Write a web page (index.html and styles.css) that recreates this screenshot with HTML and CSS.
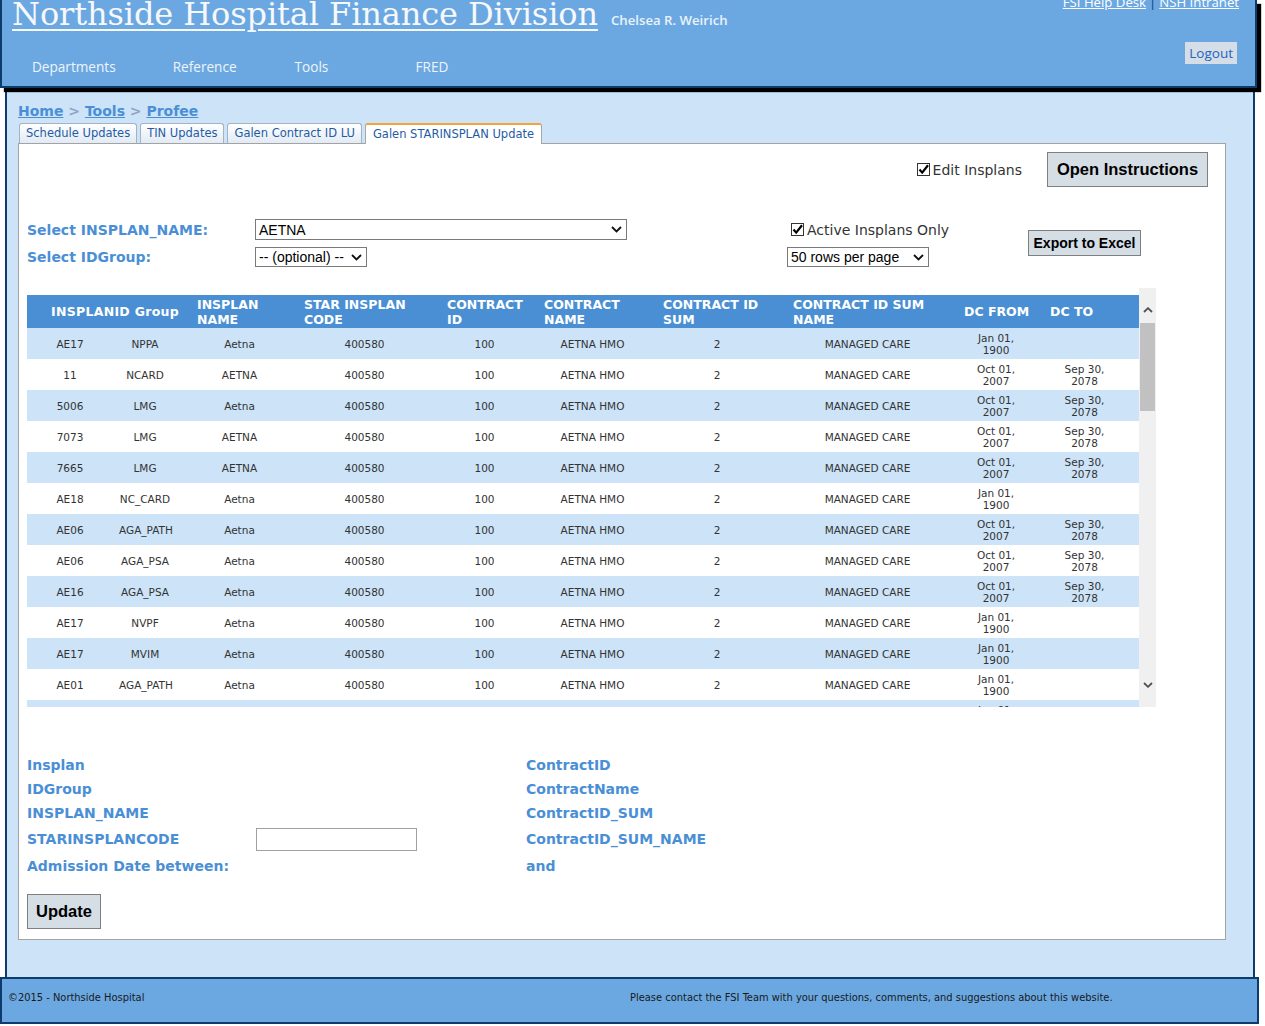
FILE: index.html
```html
<!DOCTYPE html>
<html lang="en">
<head>
<meta charset="utf-8">
<title>Northside Hospital Finance Division</title>
<link rel="stylesheet" href="styles.css">
</head>
<body>
<header class="site-header">
  <div class="brand-col">
    <div class="brand"><a class="title" href="#">Northside Hospital Finance Division</a><span class="user">Chelsea R. Weirich</span></div>
    <nav class="nav">
      <a href="#">Departments</a>
      <a href="#">Reference</a>
      <a href="#">Tools</a>
      <a href="#">FRED</a>
    </nav>
  </div>
  <div class="util">
    <div class="links"><a href="#">FSI Help Desk</a><span class="sep">|</span><a href="#">NSH Intranet</a></div>
    <a class="logout" href="#">Logout</a>
  </div>
</header>

<main class="main">
  <div class="crumbs"><a href="#">Home</a> &gt; <a href="#">Tools</a> &gt; <a href="#">Profee</a></div>
  <div class="tabs">
    <span class="tab">Schedule Updates</span>
    <span class="tab">TIN Updates</span>
    <span class="tab">Galen Contract ID LU</span>
    <span class="tab active">Galen STARINSPLAN Update</span>
  </div>
  <section class="panel">
    <div class="toolbar">
      <label class="check"><svg class="cb" width="13" height="13" viewBox="0 0 13 13"><rect x="0.5" y="0.5" width="12" height="12" fill="#fff" stroke="#333"/><path d="M2.5 6.5 L5.2 9.6 L11 2.2" fill="none" stroke="#000" stroke-width="2.2"/></svg>Edit Insplans</label>
      <button class="btn btn-open">Open Instructions</button>
    </div>

    <div class="filters">
      <div class="filter-grid">
        <span class="label">Select INSPLAN_NAME:</span>
        <div class="select select-name"><span>AETNA</span><svg class="chev" width="11" height="7" viewBox="0 0 11 7"><path d="M1 1 L5.5 5.5 L10 1" fill="none" stroke="#111" stroke-width="1.8"/></svg></div>
        <span class="label">Select IDGroup:</span>
        <div class="select select-group"><span>-- (optional) --</span><svg class="chev" width="11" height="7" viewBox="0 0 11 7"><path d="M1 1 L5.5 5.5 L10 1" fill="none" stroke="#111" stroke-width="1.8"/></svg></div>
      </div>
      <div class="filter-mid">
        <label class="check"><svg class="cb" width="13" height="13" viewBox="0 0 13 13"><rect x="0.5" y="0.5" width="12" height="12" fill="#fff" stroke="#333"/><path d="M2.5 6.5 L5.2 9.6 L11 2.2" fill="none" stroke="#000" stroke-width="2.2"/></svg>Active Insplans Only</label>
        <div class="select select-rows"><span>50 rows per page</span><svg class="chev" width="11" height="7" viewBox="0 0 11 7"><path d="M1 1 L5.5 5.5 L10 1" fill="none" stroke="#111" stroke-width="1.8"/></svg></div>
      </div>
      <button class="btn btn-export">Export to Excel</button>
    </div>

    <div class="grid-wrap">
      <div class="grid-scroll">
        <table class="data">
          <colgroup>
            <col class="c1"><col class="c2"><col class="c3"><col class="c4"><col class="c5">
            <col class="c6"><col class="c7"><col class="c8"><col class="c9"><col class="c10">
          </colgroup>
          <thead>
            <tr>
              <th colspan="2" class="th-group">INSPLANID Group</th>
              <th>INSPLAN NAME</th>
              <th>STAR INSPLAN CODE</th>
              <th>CONTRACT ID</th>
              <th>CONTRACT NAME</th>
              <th>CONTRACT ID SUM</th>
              <th>CONTRACT ID SUM NAME</th>
              <th>DC FROM</th>
              <th>DC TO</th>
            </tr>
          </thead>
          <tbody>
            <tr><td>AE17</td><td>NPPA</td><td>Aetna</td><td>400580</td><td>100</td><td>AETNA HMO</td><td>2</td><td>MANAGED CARE</td><td>Jan 01,<br>1900</td><td></td></tr>
            <tr><td>11</td><td>NCARD</td><td>AETNA</td><td>400580</td><td>100</td><td>AETNA HMO</td><td>2</td><td>MANAGED CARE</td><td>Oct 01,<br>2007</td><td>Sep 30,<br>2078</td></tr>
            <tr><td>5006</td><td>LMG</td><td>Aetna</td><td>400580</td><td>100</td><td>AETNA HMO</td><td>2</td><td>MANAGED CARE</td><td>Oct 01,<br>2007</td><td>Sep 30,<br>2078</td></tr>
            <tr><td>7073</td><td>LMG</td><td>AETNA</td><td>400580</td><td>100</td><td>AETNA HMO</td><td>2</td><td>MANAGED CARE</td><td>Oct 01,<br>2007</td><td>Sep 30,<br>2078</td></tr>
            <tr><td>7665</td><td>LMG</td><td>AETNA</td><td>400580</td><td>100</td><td>AETNA HMO</td><td>2</td><td>MANAGED CARE</td><td>Oct 01,<br>2007</td><td>Sep 30,<br>2078</td></tr>
            <tr><td>AE18</td><td>NC_CARD</td><td>Aetna</td><td>400580</td><td>100</td><td>AETNA HMO</td><td>2</td><td>MANAGED CARE</td><td>Jan 01,<br>1900</td><td></td></tr>
            <tr><td>AE06</td><td>AGA_PATH</td><td>Aetna</td><td>400580</td><td>100</td><td>AETNA HMO</td><td>2</td><td>MANAGED CARE</td><td>Oct 01,<br>2007</td><td>Sep 30,<br>2078</td></tr>
            <tr><td>AE06</td><td>AGA_PSA</td><td>Aetna</td><td>400580</td><td>100</td><td>AETNA HMO</td><td>2</td><td>MANAGED CARE</td><td>Oct 01,<br>2007</td><td>Sep 30,<br>2078</td></tr>
            <tr><td>AE16</td><td>AGA_PSA</td><td>Aetna</td><td>400580</td><td>100</td><td>AETNA HMO</td><td>2</td><td>MANAGED CARE</td><td>Oct 01,<br>2007</td><td>Sep 30,<br>2078</td></tr>
            <tr><td>AE17</td><td>NVPF</td><td>Aetna</td><td>400580</td><td>100</td><td>AETNA HMO</td><td>2</td><td>MANAGED CARE</td><td>Jan 01,<br>1900</td><td></td></tr>
            <tr><td>AE17</td><td>MVIM</td><td>Aetna</td><td>400580</td><td>100</td><td>AETNA HMO</td><td>2</td><td>MANAGED CARE</td><td>Jan 01,<br>1900</td><td></td></tr>
            <tr><td>AE01</td><td>AGA_PATH</td><td>Aetna</td><td>400580</td><td>100</td><td>AETNA HMO</td><td>2</td><td>MANAGED CARE</td><td>Jan 01,<br>1900</td><td></td></tr>
            <tr><td>AE19</td><td>NC_PSA</td><td>Aetna</td><td>400580</td><td>100</td><td>AETNA HMO</td><td>2</td><td>MANAGED CARE</td><td>Jan 01,<br>1900</td><td></td></tr>
            <tr><td>AE20</td><td>NPPA</td><td>Aetna</td><td>400580</td><td>100</td><td>AETNA HMO</td><td>2</td><td>MANAGED CARE</td><td>Jan 01,<br>1900</td><td></td></tr>
          </tbody>
        </table>
      </div>
      <div class="vscroll">
        <div class="vs-up"><svg width="10" height="6" viewBox="0 0 10 6"><path d="M1 5 L5 1.2 L9 5" fill="none" stroke="#505050" stroke-width="1.8"/></svg></div>
        <div class="vs-thumb"></div>
        <div class="vs-space"></div>
        <div class="vs-down"><svg width="10" height="6" viewBox="0 0 10 6"><path d="M1 1 L5 4.8 L9 1" fill="none" stroke="#505050" stroke-width="1.8"/></svg></div>
      </div>
    </div>

    <div class="edit-form">
      <span class="label">Insplan</span><span></span><span class="label">ContractID</span>
      <span class="label">IDGroup</span><span></span><span class="label">ContractName</span>
      <span class="label">INSPLAN_NAME</span><span></span><span class="label">ContractID_SUM</span>
      <span class="label">STARINSPLANCODE</span><span><input class="text-input" type="text"></span><span class="label">ContractID_SUM_NAME</span>
      <span class="label">Admission Date between:</span><span></span><span class="label">and</span>
    </div>
    <button class="btn btn-update">Update</button>
  </section>
</main>

<footer class="site-footer">
  <span>©2015 - Northside Hospital</span>
  <span>Please contact the FSI Team with your questions, comments, and suggestions about this website.</span>
</footer>
</body>
</html>
```

FILE: styles.css
```css
* { box-sizing: border-box; }
html, body { margin: 0; padding: 0; overflow: hidden; }
body {
  width: 1265px;
  height: 1026px;
  background: #fff;
  font-family: "DejaVu Sans", Verdana, sans-serif;
}

/* ---------- header ---------- */
.site-header {
  position: relative;
  z-index: 2;
  width: 1257px;
  height: 88px;
  background: #6ba8e1;
  border: 2px solid #0d3b6b;
  border-top: 0;
  box-shadow: 4px 4px 1px #000;
  display: flex;
  justify-content: space-between;
  padding: 0 16px 0 10px;
}
.brand {
  line-height: 32px;
  margin-top: -2px;
  white-space: nowrap;
}
.title {
  font-family: "DejaVu Serif", serif;
  font-size: 32px;
  letter-spacing: -0.1px;
  color: #f6f8fb;
  text-decoration: underline;
  text-decoration-thickness: 2px;
  text-underline-offset: 4px;
}
.user {
  font-family: "Open Sans", sans-serif;
  font-weight: 600;
  font-size: 13.2px;
  color: #eaf2fb;
  margin-left: 13px;
  line-height: 1;
}
.nav {
  display: flex;
  margin-top: 21px;
  margin-left: -9px;
}
.nav a {
  min-width: 121px;
  padding: 0 29px;
  font-family: "Open Sans", sans-serif;
  font-size: 13.6px;
  line-height: 20px;
  color: #eef4fb;
  text-decoration: none;
}
.nav a:first-child { padding-right: 28px; }
.util {
  display: flex;
  flex-direction: column;
  align-items: flex-end;
  margin-top: -7px;
}
.links {
  font-family: "Open Sans", sans-serif;
  font-size: 13.2px;
  line-height: 18px;
  white-space: nowrap;
}
.links a { color: #fff; text-decoration: underline; }
.links .sep { color: #0d3b6b; margin: 0 3px; }
.logout {
  margin-top: 31px;
  margin-right: 2px;
  height: 22px;
  padding: 0 4px;
  background: #d5dde6;
  color: #1f63c3;
  font-family: "Open Sans", sans-serif;
  font-size: 13.5px;
  line-height: 22px;
  text-decoration: none;
}

/* ---------- main ---------- */
.main {
  margin-left: 5px;
  width: 1250px;
  height: 889px;
  background: #cce3f8;
  border-left: 2px solid #0d3b6b;
  border-right: 2px solid #0d3b6b;
  padding: 14px 0 0 11px;
}
.crumbs {
  font-weight: bold;
  font-size: 14px;
  line-height: 18px;
  color: #8ca6c4;
}
.crumbs a { color: #4a8fd6; text-decoration: underline; }

.tabs {
  position: relative;
  z-index: 1;
  display: flex;
  align-items: flex-start;
  gap: 3px;
  height: 21px;
  margin: 3px 0 -1px 1px;
}
.tab {
  height: 20px;
  padding: 0 6px;
  border: 1px solid #a3b2c5;
  border-bottom: 0;
  border-radius: 3px 3px 0 0;
  background: linear-gradient(#ffffff, #e2eaf4);
  font-size: 11.5px;
  line-height: 19px;
  color: #1f5ca6;
  white-space: nowrap;
}
.tab.active {
  height: 21px;
  padding: 0 7px;
  background: #fff;
  border-color: #a8a8a8;
  border-top: 2px solid #f3a33a;
  line-height: 18px;
}

.panel {
  width: 1208px;
  height: 797px;
  background: #fff;
  border: 1px solid #a3a3a3;
  padding: 8px 17px 10px 8px;
}

.toolbar {
  display: flex;
  justify-content: flex-end;
  align-items: center;
  height: 35px;
}
.check {
  display: inline-flex;
  align-items: center;
  gap: 3px;
  font-size: 14px;
  color: #333;
  white-space: nowrap;
}
.cb { flex: none; }

.btn {
  background: #d5dde5;
  border: 1px solid #7f7f7f;
  font-family: "Liberation Sans", Arial, sans-serif;
  font-weight: bold;
  color: #000;
  padding: 0;
  text-align: center;
}
.btn-open {
  width: 161px;
  height: 35px;
  margin-left: 25px;
  font-size: 16.5px;
}

.filters {
  display: flex;
  align-items: flex-start;
  margin-top: 32px;
  height: 48px;
}
.filter-grid {
  display: grid;
  grid-template-columns: 228px auto;
  row-gap: 7px;
  align-items: center;
}
.label {
  font-weight: bold;
  font-size: 14px;
  color: #4a8fd6;
  white-space: nowrap;
}
.select {
  display: flex;
  align-items: center;
  justify-content: space-between;
  border: 1px solid #7a7a7a;
  background: #fff;
  padding: 0 4px 0 3px;
  font-family: "Liberation Sans", Arial, sans-serif;
  font-size: 14px;
  color: #000;
  white-space: nowrap;
}
.select-name { width: 372px; height: 21px; }
.select-group { width: 112px; height: 20px; }
.select-rows { width: 142px; height: 20px; }
.chev { flex: none; }
.filter-mid {
  width: 164px;
  margin-left: 160px;
  display: flex;
  flex-direction: column;
  gap: 7px;
}
.filter-mid .check { height: 21px; margin-left: 4px; }
.btn-export {
  width: 113px;
  height: 26px;
  margin: 11px 0 0 77px;
  font-size: 14px;
}

/* ---------- grid ---------- */
.grid-wrap {
  display: flex;
  width: 1129px;
  height: 419px;
  margin-top: 21px;
}
.grid-scroll {
  width: 1112px;
  overflow: hidden;
  padding-top: 7px;
}
.data {
  width: 1112px;
  border-collapse: collapse;
  table-layout: fixed;
}
.c1 { width: 92px; }
.c2 { width: 70px; }
.c3 { width: 107px; }
.c4 { width: 143px; }
.c5 { width: 97px; }
.c6 { width: 119px; }
.c7 { width: 130px; }
.c8 { width: 171px; }
.c9 { width: 86px; }
.c10 { width: 97px; }
.data th {
  height: 33px;
  padding: 0 4px 0 8px;
  background: #4a8fd3;
  color: #fff;
  font-size: 12.5px;
  line-height: 15px;
  font-weight: bold;
  text-align: left;
  vertical-align: middle;
}
.data th.th-group {
  text-align: center;
  padding: 0 0 0 14px;
  letter-spacing: 0.3px;
}
.data td {
  height: 31px;
  padding: 0 6px 0 0;
  font-size: 10.5px;
  line-height: 12px;
  color: #333;
  text-align: center;
  vertical-align: middle;
  white-space: nowrap;
}
.data td:nth-child(2) { padding-right: 18px; }
.data td:nth-child(10) { padding-right: 12px; }
.data tbody tr:nth-child(odd) td { background: #cce3f8; }

.vscroll {
  width: 17px;
  background: #f0f0f0;
  display: flex;
  flex-direction: column;
}
.vs-up, .vs-down {
  display: flex;
  justify-content: center;
  align-items: flex-start;
}
.vs-up { height: 35px; padding-top: 19px; }
.vs-down { height: 44px; padding-top: 19px; }
.vs-thumb {
  height: 88px;
  margin: 0 1px;
  background: #c1c1c1;
}
.vs-space { flex: 1; }

/* ---------- edit form ---------- */
.edit-form {
  display: grid;
  grid-template-columns: 228px 271px auto;
  grid-template-rows: 24px 24px 24px 28px 26px;
  align-items: center;
  margin-top: 46px;
}
.text-input {
  display: block;
  width: 161px;
  height: 23px;
  margin-left: 1px;
  border: 1px solid #a0a0a0;
  background: #fff;
}
.btn-update {
  display: block;
  width: 74px;
  height: 35px;
  margin-top: 15px;
  font-size: 16.5px;
}

/* ---------- footer ---------- */
.site-footer {
  width: 1259px;
  height: 47px;
  background: #6ba8e1;
  border: 2px solid #0d3b6b;
  display: grid;
  grid-template-columns: 622px auto;
  padding: 12px 0 0 6px;
  font-family: "DejaVu Sans Condensed", "DejaVu Sans", sans-serif;
  font-stretch: condensed;
  font-size: 11px;
  line-height: 14px;
  color: #1a1a1a;
  white-space: nowrap;
}
```
